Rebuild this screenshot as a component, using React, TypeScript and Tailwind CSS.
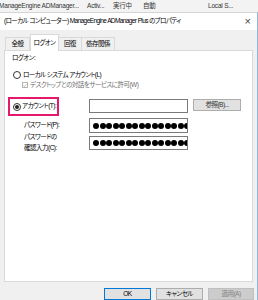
import React from "react";

function Dots() {
  return (
    <div className="flex items-center gap-[0.5px] pl-[3px] overflow-hidden h-full">
      {Array.from({ length: 17 }).map((_, i) => (
        <span key={i} className="shrink-0 w-[6px] h-[6px] rounded-full bg-black" />
      ))}
    </div>
  );
}

export default function App() {
  return (
    <div className="relative w-[258px] h-[300px] overflow-hidden bg-[#f0f0f0] font-['Liberation_Sans','Noto_Sans_CJK_JP',sans-serif] [font-feature-settings:'palt'] text-[6.5px] tracking-[-0.5px] leading-none text-black">
      {/* background list row */}
      <div className="h-[12px] bg-[#f3f3f3] relative text-[#333] whitespace-nowrap tracking-[-0.2px]">
        <span className="absolute left-[-1px] top-[3px] w-[84px] overflow-hidden">ManageEngine ADManager...</span>
        <span className="absolute left-[87px] top-[3px]">Activ...</span>
        <span className="absolute left-[113px] top-[3px]">実行中</span>
        <span className="absolute left-[143px] top-[3px]">自動</span>
        <span className="absolute left-[208px] top-[3px]">Local S...</span>
      </div>
      {/* dialog */}
      <div className="border-t border-[#d4d4d4] border-r border-r-[#8fb8df] h-[288px] flex flex-col">
        <div className="h-[17px] bg-white flex items-center pl-[4px] pr-[6px] whitespace-nowrap">
          <span className="tracking-[-0.6px]">(ローカル コンピューター) ManageEngine ADManager Plus のプロパティ</span>
          <span className="ml-auto text-[11px] font-light text-[#444] tracking-normal">×</span>
        </div>
        {/* tabs */}
        <div className="h-[20px] flex items-end pl-[5px] relative z-10">
          <div className="h-[13px] w-[25px] border border-b-0 border-[#d9d9d9] flex items-center justify-center">全般</div>
          <div className="h-[17px] w-[29px] border border-b-0 border-[#d9d9d9] bg-white flex items-center justify-center mb-[-1px]">ログオン</div>
          <div className="h-[13px] w-[23px] border border-b-0 border-l-0 border-[#d9d9d9] flex items-center justify-center">回復</div>
          <div className="h-[13px] w-[33px] border border-b-0 border-l-0 border-[#d9d9d9] flex items-center justify-center">依存関係</div>
        </div>
        {/* panel */}
        <div className="ml-[4px] mr-[4px] h-[232px] bg-white border border-[#d9d9d9] flex flex-col pt-[2px]">
          <div className="h-[10px] flex items-center pl-[7px]">ログオン:</div>
          <div className="h-[10px] mt-[7px] flex items-center pl-[8px]">
            <span className="shrink-0 w-[8px] h-[8px] rounded-full border border-[#333] bg-white" />
            <span className="ml-[2px] tracking-[-0.6px]">ローカル システム アカウント(L)</span>
          </div>
          <div className="h-[10px] flex items-center pl-[17px] text-[#6d6d6d]">
            <span className="shrink-0 w-[6px] h-[6px] border border-[#b5b5b5] flex items-center justify-center">
              <svg width="5" height="5" viewBox="0 0 5 5">
                <path d="M0.6 2.6 L1.9 3.9 L4.4 0.9" fill="none" stroke="#9a9a9a" strokeWidth="0.8" />
              </svg>
            </span>
            <span className="ml-[2px]">デスクトップとの対話をサービスに許可(W)</span>
          </div>
          {/* account row */}
          <div className="h-[19px] mt-[7px] flex items-start pl-[3px]">
            <div className="shrink-0 w-[51px] h-[19px] border-2 border-[#e5186e] flex items-center pl-[3px]">
              <span className="shrink-0 w-[8px] h-[8px] rounded-full border border-[#333] flex items-center justify-center">
                <span className="w-[4px] h-[4px] rounded-full bg-[#222]" />
              </span>
              <span className="ml-[1px] whitespace-nowrap">アカウント(T):</span>
            </div>
            <div className="shrink-0 ml-[30px] mt-[2px] w-[99px] h-[14px] border border-[#7a7a7a] bg-white" />
            <div className="shrink-0 ml-[5px] mt-[2px] w-[48px] h-[12px] border border-[#adadad] bg-[#e1e1e1] flex items-center justify-center text-[#333]">参照(B)...</div>
          </div>
          {/* password */}
          <div className="h-[15px] mt-[2px] flex items-center pl-[19px]">
            <span className="shrink-0 w-[65px]">パスワード(P):</span>
            <div className="shrink-0 w-[99px] h-[15px] border border-[#7a7a7a] bg-white"><Dots /></div>
          </div>
          <div className="h-[14px] mt-[3px] flex items-start pl-[19px]">
            <div className="shrink-0 w-[65px] mt-[-5px] leading-[11px]">
              <div>パスワードの</div>
              <div>確認入力(C):</div>
            </div>
            <div className="shrink-0 w-[99px] h-[14px] border border-[#7a7a7a] bg-white"><Dots /></div>
          </div>
        </div>
        {/* buttons */}
        <div className="flex justify-end gap-[5px] pr-[3px] mt-[6px]">
          <div className="w-[47px] h-[12px] border border-[#0078d7] bg-[#e1e1e1] flex items-center justify-center">OK</div>
          <div className="w-[47px] h-[12px] border border-[#adadad] bg-[#e1e1e1] flex items-center justify-center">キャンセル</div>
          <div className="w-[46px] h-[12px] border border-[#bfbfbf] bg-[#cccccc] flex items-center justify-center text-[#838383]">適用(A)</div>
        </div>
      </div>
    </div>
  );
}
